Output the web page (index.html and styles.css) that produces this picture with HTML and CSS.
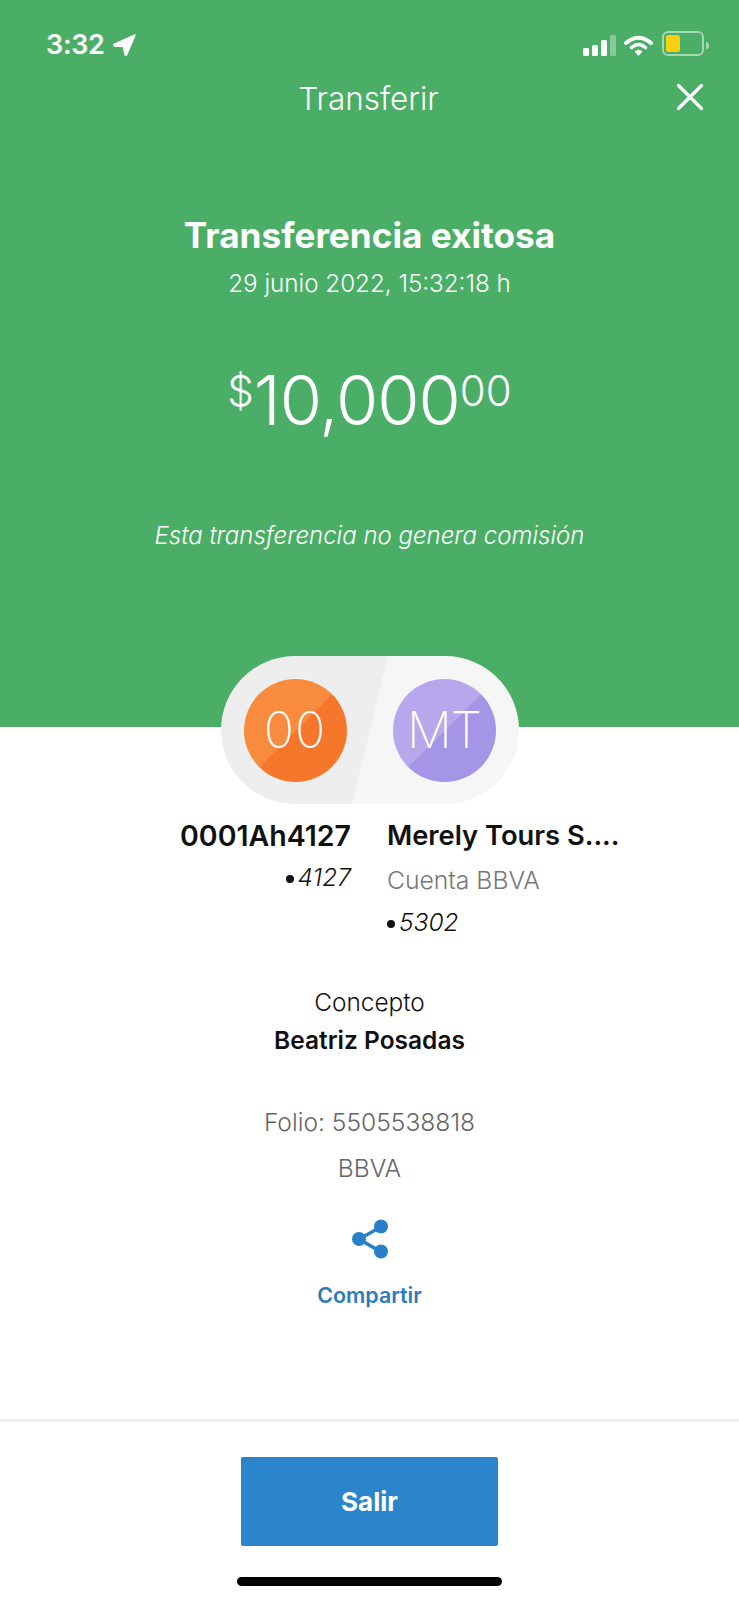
FILE: index.html
```html
<!DOCTYPE html>
<html lang="es">
<head>
  <meta charset="utf-8">
  <title>Transferir</title>
  <link rel="stylesheet" href="styles.css">
</head>
<body>
  <div class="screen">
    <div class="top">
      <div class="status">
        <div class="clock">
          <span>3:32</span>
          <svg class="arrow" width="23" height="22" viewBox="0 0 23 22">
            <path d="M22 1 L1 10.500 Q0 11.500 1.500 12 L10.500 12.500 L12 20.500 Q12.800 21.800 13.700 20.500 Z" fill="#fff" stroke="#fff" stroke-width="1.500" stroke-linejoin="round"/>
          </svg>
        </div>
        <div class="status-icons">
          <div class="signal">
            <i class="bar b1"></i><i class="bar b2"></i><i class="bar b3"></i><i class="bar b4"></i>
          </div>
          <svg class="wifi" width="29" height="21" viewBox="0 0 29 21">
            <path d="M2 8 Q14.500 -2.500 27 8" fill="none" stroke="#fff" stroke-width="4" stroke-linecap="round"/>
            <path d="M7.500 12.500 Q14.500 6.500 21.500 12.500" fill="none" stroke="#fff" stroke-width="3.500" stroke-linecap="round"/>
            <path d="M10.500 16.500 Q14.500 12.800 18.500 16.500 L14.500 21 Z" fill="#fff"/>
          </svg>
          <div class="battery"><div class="charge"></div></div>
          <div class="nub"></div>
        </div>
      </div>

      <div class="nav">
        <span class="nav-title">Transferir</span>
        <svg class="close" width="26" height="26" viewBox="0 0 26 26">
          <path d="M1.500 1.500 L24.500 24.500 M24.500 1.500 L1.500 24.500" stroke="#fff" stroke-width="3.200" stroke-linecap="round"/>
        </svg>
      </div>

      <h1 class="result">Transferencia exitosa</h1>
      <p class="date">29 junio 2022, 15:32:18 h</p>
      <p class="amount"><span class="small">$</span>10,000<span class="small">00</span></p>
      <p class="note">Esta transferencia no genera comisión</p>
    </div>

    <div class="pill">
      <div class="avatar orange">00</div>
      <div class="avatar purple">MT</div>
    </div>

    <div class="accounts">
      <div class="account from">
        <div class="acc-name">0001Ah4127</div>
        <div class="acc-num"><span class="dot"></span>4127</div>
      </div>
      <div class="account to">
        <div class="acc-name">Merely Tours S....</div>
        <div class="acc-bank">Cuenta BBVA</div>
        <div class="acc-num"><span class="dot"></span>5302</div>
      </div>
    </div>

    <div class="concept">
      <div class="concept-label">Concepto</div>
      <div class="concept-value">Beatriz Posadas</div>
    </div>

    <div class="folio">
      <div>Folio: 5505538818</div>
      <div class="bank">BBVA</div>
    </div>

    <div class="share">
      <svg width="36" height="40" viewBox="0 0 36 40">
        <path d="M29 8 L7 20 L29 33" fill="none" stroke="#2a80c8" stroke-width="3.500"/>
        <circle cx="7" cy="20" r="7" fill="#2a80c8"/>
        <circle cx="29" cy="7.500" r="7" fill="#2a80c8"/>
        <circle cx="29" cy="32.500" r="7" fill="#2a80c8"/>
      </svg>
      <div class="share-label">Compartir</div>
    </div>

    <div class="bottom">
      <button class="exit">Salir</button>
      <div class="home-bar"></div>
    </div>
  </div>
</body>
</html>
```

FILE: styles.css
```css
body {
  margin: 0;
  background: #fff;
  color: #111;
  font-family: Inter, "Liberation Sans", sans-serif;
}

p, h1 {
  margin: 0;
}

.screen {
  width: 739px;
  height: 1600px;
  overflow: hidden;
  display: flex;
  flex-direction: column;
  text-align: center;
}

.top {
  height: 727px;
  flex-shrink: 0;
  background: #4bae66;
  color: #fff;
}

/* status bar */
.status {
  display: flex;
  justify-content: space-between;
  padding: 33px 30px 0 46px;
  height: 23px;
}

.clock {
  display: flex;
  align-items: center;
  gap: 8px;
  font-size: 27px;
  font-weight: 600;
  line-height: 23px;
  letter-spacing: -0.3px;
}

.status-icons {
  display: flex;
  align-items: flex-end;
}

.signal {
  display: flex;
  align-items: flex-end;
  gap: 2.5px;
  height: 21px;
  margin-right: 8px;
}

.bar {
  width: 6.500px;
  background: #fff;
  border-radius: 1.500px;
}

.b1 { height: 8px; }
.b2 { height: 11px; }
.b3 { height: 16px; }
.b4 { height: 21px; background: rgba(255, 255, 255, 0.35); }

.wifi {
  margin-right: 9px;
}

.battery {
  width: 34px;
  height: 17px;
  padding: 2px;
  border: 2px solid rgba(255, 255, 255, 0.5);
  border-radius: 6px;
}

.charge {
  width: 14px;
  height: 100%;
  background: #fbd00f;
  border-radius: 2.500px;
}

.nub {
  width: 3px;
  height: 7px;
  margin: 0 0 7px 2px;
  background: rgba(255, 255, 255, 0.5);
  border-radius: 0 3px 3px 0;
}

/* title row */
.nav {
  position: relative;
  margin-top: 26px;
  height: 34px;
}

.nav-title {
  font-size: 31.5px;
  font-weight: 300;
  line-height: 34px;
  margin-left: -2px;
}

.close {
  position: absolute;
  right: 36px;
  top: 2px;
}

.result {
  margin-top: 97px;
  font-size: 35.2px;
  font-weight: 700;
  line-height: 44px;
}

.date {
  margin-top: 12px;
  font-size: 24.2px;
  font-weight: 300;
  line-height: 30px;
}

.amount {
  margin-top: 50px;
  font-size: 68.5px;
  font-weight: 300;
  line-height: 84px;
  letter-spacing: -1px;
}

.small {
  font-size: 42px;
  vertical-align: 19px;
  letter-spacing: 0;
}

.note {
  margin-top: 78px;
  font-size: 24px;
  font-weight: 300;
  font-style: italic;
  line-height: 30px;
}

/* account avatars, sits half over the green block */
.pill {
  align-self: center;
  width: 298px;
  height: 148px;
  margin-top: -71px;
  padding: 0 23px;
  box-sizing: border-box;
  display: flex;
  align-items: center;
  justify-content: space-between;
  border-radius: 74px;
  background: linear-gradient(103.7deg, #eee 50%, #f6f6f6 50%);
}

.avatar {
  width: 103px;
  height: 103px;
  border-radius: 50%;
  color: #fff;
  font-size: 50px;
  font-weight: 250;
  line-height: 103px;
}

.orange {
  background: linear-gradient(135deg, #f88b3e 50%, #f6772c 50%);
  letter-spacing: 1px;
}

.purple {
  background: linear-gradient(135deg, #b7a8ee 50%, #a495e6 50%);
  letter-spacing: -1px;
}

.accounts {
  display: flex;
  justify-content: center;
  gap: 36px;
  margin-top: 12px;
  height: 163px;
}

.account {
  width: 233px;
  white-space: nowrap;
}

.from {
  text-align: right;
  margin-left: -1px;
}

.to {
  text-align: left;
}

.acc-name {
  font-size: 28.5px;
  font-weight: 600;
  line-height: 40px;
}

.to .acc-name {
  font-size: 27.3px;
}

.acc-num {
  font-size: 24.5px;
  font-weight: 300;
  font-style: italic;
  line-height: 42px;
}

.from .acc-num {
  margin-top: 0;
}

.dot {
  display: inline-block;
  width: 8px;
  height: 8px;
  margin-right: 4px;
  border-radius: 50%;
  background: #111;
  vertical-align: 3px;
}

.acc-bank {
  margin-top: 4px;
  font-size: 24.7px;
  font-weight: 300;
  color: #777;
  line-height: 41px;
}

.concept {
  margin-top: 4px;
}

.concept-label {
  font-size: 24.4px;
  font-weight: 300;
  line-height: 38px;
}

.concept-value {
  font-size: 24.5px;
  font-weight: 600;
  line-height: 38px;
}

.folio {
  margin-top: 40px;
  font-size: 24.6px;
  font-weight: 300;
  color: #666;
  line-height: 46px;
}

.share {
  margin-top: 28px;
}

.share svg {
  display: block;
  margin: 0 auto;
}

.share-label {
  margin-top: 19px;
  font-size: 21.4px;
  font-weight: 600;
  color: #2a7cbd;
  line-height: 34px;
}

/* fixed footer */
.bottom {
  margin-top: auto;
  height: 181px;
  border-top: 3px solid #eee;
  box-sizing: border-box;
  padding-top: 35px;
}

.exit {
  display: block;
  width: 257px;
  height: 89px;
  margin: 0 auto;
  border: 0;
  border-radius: 2px;
  background: #2a85cd;
  color: #fff;
  font-family: inherit;
  font-size: 26px;
  font-weight: 700;
}

.home-bar {
  width: 265px;
  height: 9px;
  margin: 31px auto 0;
  border-radius: 5px;
  background: #000;
}
```
